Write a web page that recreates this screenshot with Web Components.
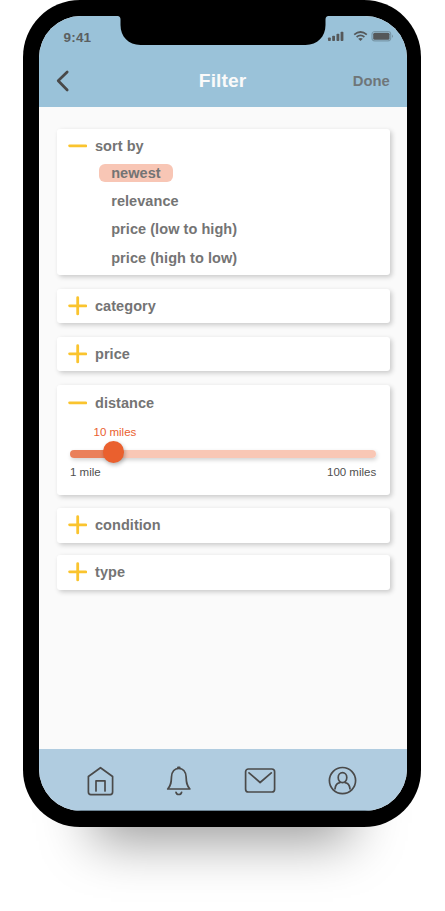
<!DOCTYPE html>
<html lang="en">
<head>
<meta charset="utf-8">
<title>Filter</title>
<style>
html,body{margin:0;background:#fff}
body{width:445px;height:911px;overflow:hidden;font-family:"Liberation Sans",Arial,sans-serif;color:#747474}
</style>
</head>
<body>
<phone-frame>
  <status-bar slot="top">9:41</status-bar>
  <nav-header slot="top" action="Done">Filter</nav-header>
  <filter-card label="sort by" open style="height:146.5px">
    <sort-option selected>newest</sort-option>
    <sort-option>relevance</sort-option>
    <sort-option>price (low to high)</sort-option>
    <sort-option>price (high to low)</sort-option>
  </filter-card>
  <filter-card label="category" style="height:34.5px;margin-top:13.5px"></filter-card>
  <filter-card label="price" style="height:34.5px;margin-top:13.5px"></filter-card>
  <filter-card label="distance" open style="height:110px;margin-top:13.5px;--head:36.5px">
    <range-slider value="10 miles" min="1 mile" max="100 miles"></range-slider>
  </filter-card>
  <filter-card label="condition" style="height:35px;margin-top:13px"></filter-card>
  <filter-card label="type" style="height:35px;margin-top:12px"></filter-card>
  <tab-bar slot="bottom"></tab-bar>
</phone-frame>
<script>
const define = (name, html) => customElements.define(name, class extends HTMLElement {
  constructor() {
    super();
    const fill = html.replace(/\{(\w+)\}/g, (_, k) => this.getAttribute(k) || '');
    this.attachShadow({mode: 'open'}).innerHTML = fill;
  }
});

define('phone-frame', `<style>
:host{display:block;position:relative;box-sizing:border-box;width:398px;height:827px;margin-left:23px;padding:16px 14.3px 15.7px 16px;background:#000;border-radius:57px;box-shadow:0 84px 50px -70px rgba(0,0,0,.4)}
.screen{display:flex;flex-direction:column;height:100%;background:#fafafa;border-radius:42px;overflow:hidden}
.top{background:#9ac2d9;height:90.6px;flex:none}
main{flex:1;padding:22.4px 17px 0 17.5px}
.notch{position:absolute;left:92px;top:15px}
</style>
<div class="screen"><div class="top"><slot name="top"></slot></div><main><slot></slot></main><slot name="bottom"></slot></div>
<svg class="notch" width="216" height="31" viewBox="0 0 216 31"><path d="M0 0H216V1H213.500Q210.500 1 210.500 4.500V10C210.500 21.500 202.500 30 190.500 30H25.500C13.500 30 5.500 21.500 5.500 10V4.500Q5.500 1 2.500 1H0Z"/></svg>`);

define('status-bar', `<style>
:host{display:flex;box-sizing:border-box;height:40px;padding:12.700px 12px 0 24.500px;justify-content:space-between;font-size:13.500px;font-weight:bold;line-height:17px;letter-spacing:.2px;color:#5b5f61}
svg{display:block;margin-top:.3px}
</style>
<span><slot></slot></span>
<svg width="68" height="14" viewBox="0 0 68 14"><g fill="#55585a"><rect x="1" y="8.500" width="2.800" height="3.500" rx=".8"/><rect x="5.200" y="6.700" width="2.800" height="5.300" rx=".8"/><rect x="9.500" y="4.700" width="2.800" height="7.300" rx=".8"/><rect x="13.600" y="2.700" width="2.800" height="9.300" rx=".8"/><rect x="46.200" y="3.700" width="16.300" height="7" rx="1.500"/><path d="M65.200 5.400Q67 7.200 65.200 9Z" opacity=".6"/><path d="M33.500 8.900Q34.900 8.900 35.800 9.700L33.500 12 31.200 9.700Q32.100 8.900 33.500 8.900Z"/></g><rect x="45" y="2.500" width="18.700" height="9.400" rx="2.800" fill="none" stroke="#7998a9" stroke-width="1.200"/><g fill="none" stroke="#55585a" stroke-width="1.800"><path d="M29.600 8Q33.500 4.800 37.400 8"/><path d="M27.200 5.600Q33.500.5 39.800 5.600"/></g></svg>`);

define('nav-header', `<style>
:host{display:grid;grid-template-columns:1fr auto 1fr;align-items:center;height:50px;padding:0 17px 0 17px}
b{font-size:19.200px;color:#fafafa;letter-spacing:.1px;margin-right:.5px}
span{justify-self:end;font-size:14.800px;font-weight:bold;color:#6f7679}
svg{display:block}
</style>
<svg width="15" height="24" viewBox="0 0 15 24"><path d="M11.200 3 2.200 11.800 11.200 21" fill="none" stroke="#494949" stroke-width="2.700" stroke-linecap="round" stroke-linejoin="round"/></svg>
<b><slot></slot></b><span>{action}</span>`);

define('filter-card', `<style>
:host{display:block;box-sizing:border-box;background:#fff;border-radius:3px;box-shadow:2px 2px 5px rgba(0,0,0,.2)}
header{display:flex;align-items:center;gap:8px;height:var(--head,34.500px);padding-left:11.500px;font-size:14.500px;font-weight:bold;line-height:17px;letter-spacing:.05px}
svg{display:block}
:host([open]) .v{display:none}
</style>
<header><svg width="19" height="20" viewBox="0 0 19 20" fill="none" stroke="#fac42e" stroke-width="2.800" stroke-linecap="round"><path d="M1.600 9.800H17.800"/><path class="v" d="M9.700 1.700V17.900"/></svg><span>{label}</span></header>
<slot></slot>`);

define('sort-option', `<style>
:host{display:block;box-sizing:border-box;width:max-content;position:relative;top:.5px;height:18.500px;margin:0 0 9.700px 42px;padding:0 12px 0 12.700px;border-radius:6px;font-size:14.500px;font-weight:bold;line-height:18.500px;letter-spacing:.06px}
:host([selected]){background:#f8c6b5}
</style><slot></slot>`);

define('range-slider', `<style>
:host{display:block;margin:0 13.500px;font-size:11.500px;line-height:13px;color:#4f4f4f}
.value{margin:4.500px 0 0 23.500px;color:#ea602e}
.track{position:relative;margin-top:11.200px;height:7.600px;border-radius:4px;background:linear-gradient(90deg,#ea805b 43px,#f9c7b5 43px);box-shadow:1px 2px 4px rgba(0,0,0,.18)}
.knob{position:absolute;left:33px;top:-8.800px;width:21.400px;height:21.400px;border-radius:50%;background:#ea602e;box-shadow:1px 2px 4px rgba(0,0,0,.28)}
.ends{display:flex;justify-content:space-between;margin-top:8.500px}
</style>
<div class="value">{value}</div><div class="track"><div class="knob"></div></div><div class="ends"><span>{min}</span><span>{max}</span></div>`);

define('tab-bar', `<style>
:host{display:flex;box-sizing:border-box;flex:none;height:62.300px;padding:15px 48.500px 0 46px;justify-content:space-between;background:#b0cce0;box-shadow:inset 0 -1px #6d8494}
svg{display:block;overflow:visible;fill:none;stroke:#4a4a4a;stroke-width:1.700;stroke-linecap:round;stroke-linejoin:round}
</style>
<svg width="31" height="34" viewBox="0 0 31 34"><path d="M15.500 3.700 27.600 12.500V28Q27.600 30.600 25.200 30.600H5.800Q3.400 30.600 3.400 28V12.500Z"/><path d="M11 27V16.800H20V27"/></svg>
<svg width="31" height="34" viewBox="1.700 0 31 34"><path d="M4.400 25C7.800 21.500 8 18 8.200 12.800C8.500 7.500 11.500 4.300 15.500 4.300S22.500 7.500 22.800 12.800C23 18 23.200 21.500 26.600 25Z"/><path d="M12.700 28.300Q13.200 30.500 15.500 30.500T18.300 28.300"/><path d="M14.800 3.500H16.200" stroke-width="2.200"/></svg>
<svg width="33" height="34" viewBox="1.300 0 33 34"><rect x="1.900" y="5" width="29" height="23" rx="2.800"/><path d="M5.300 8.900 16.400 18.500 27.600 8.900"/></svg>
<svg width="31" height="34" viewBox="0 0 31 34"><circle cx="15.500" cy="16.600" r="13.100"/><ellipse cx="15.500" cy="13.600" rx="4.300" ry="5"/><path d="M8 24.800Q8.700 19.300 12.900 18.700M18.100 18.700Q22.300 19.300 23 24.800"/></svg>`);
</script>
</body>
</html>
